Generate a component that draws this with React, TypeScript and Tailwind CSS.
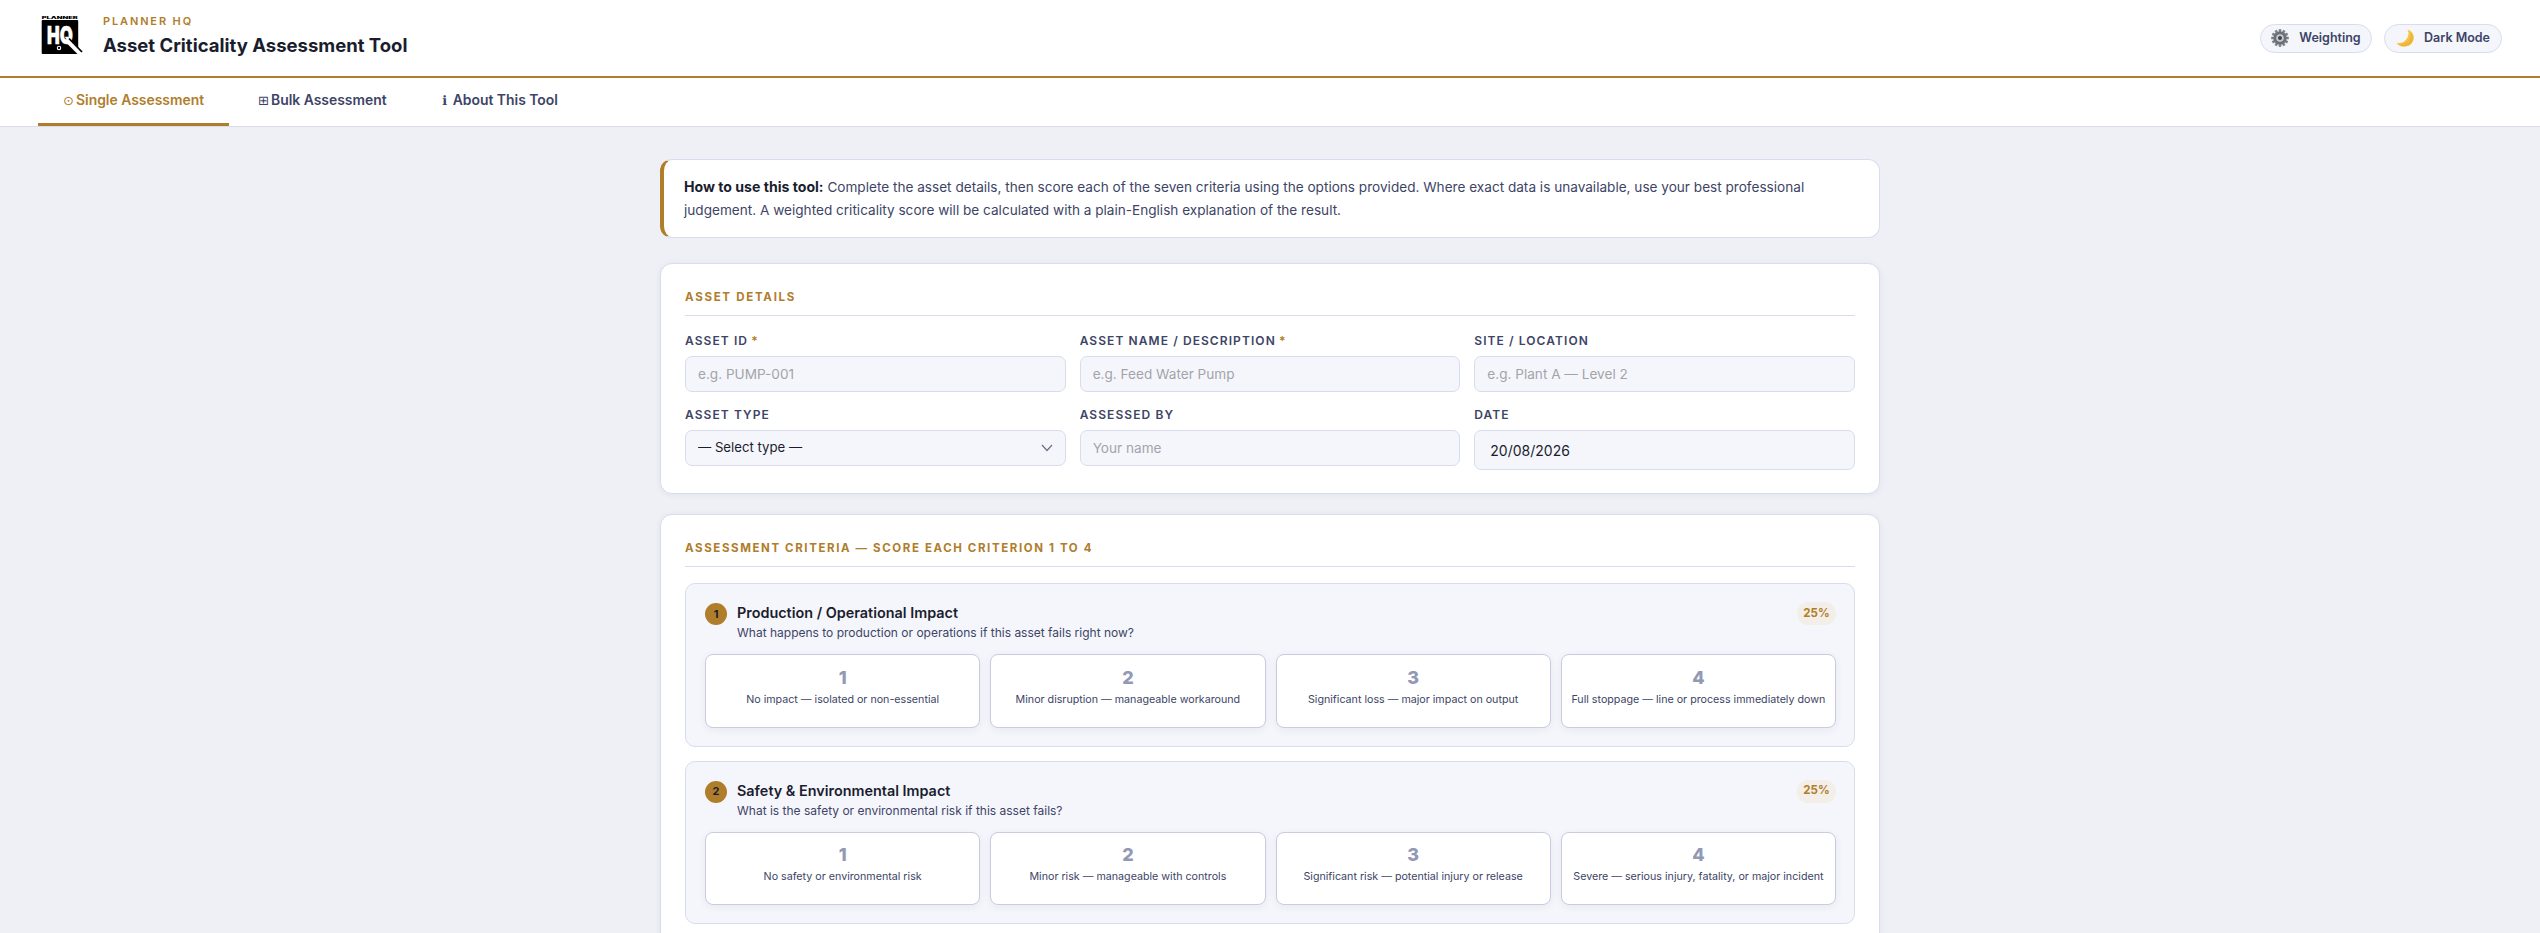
import React from "react";

const gold = "text-[#b07d2b]";

function Logo() {
  return (
    <svg width="42" height="38" viewBox="0 0 42 38" className="mb-[6px] shrink-0 overflow-visible">
      <text x="0.7" y="3.4" fontSize="3.8" fontWeight="900" fontFamily="Inter, sans-serif" textLength="36" lengthAdjust="spacingAndGlyphs" fill="#000">PLANNER</text>
      <rect x="0.7" y="4" width="36.5" height="34" rx="1" fill="#000" />
      <text x="6" y="28" fontSize="25" fontWeight="900" fontFamily="Inter, sans-serif" textLength="26" lengthAdjust="spacingAndGlyphs" fill="#fff" stroke="#fff" strokeWidth="0.5">HQ</text>
      <path d="M27 25L39 37" stroke="#fff" strokeWidth="5" />
      <path d="M28 22.5L41 36" stroke="#000" strokeWidth="1.8" />
      <circle cx="18" cy="32" r="1.7" fill="none" stroke="#fff" strokeWidth="1.1" />
    </svg>
  );
}

function Gear() {
  const teeth = Array.from({ length: 12 }, (_, i) => i * 30);
  return (
    <svg width="18" height="18" viewBox="0 0 18 18" className="shrink-0">
      {teeth.map((a) => (
        <rect key={a} x="7.7" y="0.2" width="2.6" height="4" fill="#7d8087" transform={`rotate(${a} 9 9)`} />
      ))}
      <circle cx="9" cy="9" r="6.6" fill="#6d7077" />
      <circle cx="9" cy="9" r="3.8" fill="#c4c9d2" />
      <circle cx="9" cy="9" r="2" fill="#3f434b" />
    </svg>
  );
}

function Moon() {
  return (
    <svg width="18" height="18" viewBox="0 0 18 18" className="shrink-0">
      <path d="M11.5 0.5A8.6 8.6 0 0 1 17.6 9 8.6 8.6 0 0 1 9 17.5 8.6 8.6 0 0 1 0.6 13.7 9.5 9.5 0 0 0 11.5 0.5z" fill="#f6c445" />
      <path d="M14.5 3A8.6 8.6 0 0 1 17.6 9 8.6 8.6 0 0 1 9 17.5 8.6 8.6 0 0 1 2.5 15 10 10 0 0 0 14.5 3z" fill="#e5a92f" opacity="0.55" />
    </svg>
  );
}

function PillButton({ icon, label, w }: { icon: React.ReactNode; label: string; w: string }) {
  return (
    <button className={`flex h-[29px] items-center justify-center gap-[10px] rounded-full border border-[#d8dcee] bg-[#f5f6fb] text-[12.5px] font-semibold text-[#3d4466] ${w}`}>
      {icon}
      <span>{label}</span>
    </button>
  );
}

function Field({ label, req, children }: { label: string; req?: boolean; children: React.ReactNode }) {
  return (
    <div className="flex min-w-0 flex-col">
      <label className="mb-[6px] h-[18px] text-[12px] leading-[18px] font-semibold tracking-[0.09em] text-[#3d4466]">
        {label}
        {req && <span className={`${gold} -ml-[1px]`}> *</span>}
      </label>
      {children}
    </div>
  );
}

const inputCls =
  "h-[36px] w-full rounded-[7px] border border-[#d8dcee] bg-[#f5f6fb] px-[12px] text-[13.6px] text-[#1a1d2e] outline-none placeholder:text-[#a3a4aa]";

function TextField({ label, req, placeholder }: { label: string; req?: boolean; placeholder: string }) {
  return (
    <Field label={label} req={req}>
      <input className={inputCls} placeholder={placeholder} />
    </Field>
  );
}

function SectionTitle({ children, tight }: { children: React.ReactNode; tight?: boolean }) {
  return (
    <div className={`mb-[16px] border-b border-[#d8dcee] pb-[9px] text-[11.5px] leading-[18px] font-bold ${tight ? "tracking-[0.14em]" : "tracking-[0.15em]"} ${gold}`}>
      {children}
    </div>
  );
}

type Crit = { n: number; title: string; q: string; opts: string[] };

const criteria: Crit[] = [
  {
    n: 1,
    title: "Production / Operational Impact",
    q: "What happens to production or operations if this asset fails right now?",
    opts: [
      "No impact — isolated or non-essential",
      "Minor disruption — manageable workaround",
      "Significant loss — major impact on output",
      "Full stoppage — line or process immediately down",
    ],
  },
  {
    n: 2,
    title: "Safety & Environmental Impact",
    q: "What is the safety or environmental risk if this asset fails?",
    opts: [
      "No safety or environmental risk",
      "Minor risk — manageable with controls",
      "Significant risk — potential injury or release",
      "Severe — serious injury, fatality, or major incident",
    ],
  },
];

function Criterion({ c }: { c: Crit }) {
  return (
    <div className="rounded-[10px] border border-[#d8dcee] bg-[#f5f6fb] py-[18px] pr-[18px] pl-[19px]">
      <div className="mb-[11px] flex items-start justify-between">
        <div className="flex items-start gap-[10px]">
          <div className="mt-[1px] flex h-[22px] w-[22px] items-center justify-center rounded-full bg-[#b07d2b] text-[11px] font-bold text-[#1a1d2e]">
            {c.n}
          </div>
          <div className="pt-[1px]">
            <div className="text-[14.4px] leading-[20px] font-semibold text-[#1a1d2e]">{c.title}</div>
            <div className="text-[12px] leading-[20px] text-[#3d4466]">{c.q}</div>
          </div>
        </div>
        <div className="flex h-[23px] w-[39px] items-center justify-center rounded-full bg-[#f3efe8] text-[11.5px] font-bold text-[#b07d2b]">
          25%
        </div>
      </div>
      <div className="grid grid-cols-4 gap-[10px]">
        {c.opts.map((o, i) => (
          <button
            key={o}
            className="flex h-[73.5px] flex-col items-center rounded-[8px] border-[1.5px] border-[#c8cbe2] bg-white pt-[10.5px] shadow-[0_2px_8px_rgba(26,29,46,0.06)]"
          >
            <span className="text-[18px] leading-[24px] font-extrabold text-[#9399b5]">{i + 1}</span>
            <span className="mt-[2px] text-[10.7px] leading-[16px] whitespace-nowrap text-[#3d4466]">{o}</span>
          </button>
        ))}
      </div>
    </div>
  );
}

const cardCls = "rounded-[12px] border border-[#d8dcee] bg-white p-[24px] shadow-[0_1px_6px_rgba(26,29,46,0.06)]";

const tabs: { g: string; t: string; a: boolean; w: string; gw: string }[] = [
  { g: "⊙", t: "Single Assessment", a: true, w: "w-[191px]", gw: "w-[13px]" },
  { g: "⊞", t: "Bulk Assessment", a: false, w: "w-[180px]", gw: "w-[13px]" },
  { g: "ℹ", t: "About This Tool", a: false, w: "", gw: "w-[10.7px]" },
];

export default function App() {
  return (
    <div className="h-screen overflow-hidden bg-[#eef0f6] font-['Inter',sans-serif]">
      <header className="flex h-[78px] items-center justify-between border-b-2 border-[#b07d2b] bg-white px-[38px]">
        <div className="flex items-center gap-[20px] pl-[3px]">
          <Logo />
          <div className="mb-[5px] flex flex-col">
            <span className={`text-[11px] leading-[16px] font-semibold tracking-[0.17em] ${gold}`}>PLANNER HQ</span>
            <span className="mt-[3px] text-[18.5px] leading-[26px] font-bold text-[#1a1d2e]">Asset Criticality Assessment Tool</span>
          </div>
        </div>
        <div className="flex items-center gap-[12px]">
          <PillButton icon={<Gear />} label="Weighting" w="w-[112px]" />
          <PillButton icon={<Moon />} label="Dark Mode" w="w-[118px]" />
        </div>
      </header>

      <nav className="flex h-[49px] items-stretch gap-[4px] border-b border-[#d8dcee] bg-white px-[38px]">
        {tabs.map(({ g, t, a, w, gw }) => (
          <div
            key={t}
            className={`flex shrink-0 items-center border-b-[3px] px-[25px] text-[13.9px] font-semibold whitespace-nowrap ${w} ${
              a ? "border-[#b07d2b] text-[#b07d2b]" : "border-transparent text-[#3d4466]"
            }`}
          >
            <span className={`shrink-0 font-['DejaVu_Sans',sans-serif] text-[13px] font-normal ${gw}`}>{g}</span>
            <span>{t}</span>
          </div>
        ))}
      </nav>

      <main className="mx-auto flex w-[1220px] flex-col gap-[20px] pt-[32px]">
        <div className="mb-[5px] h-[79px] rounded-[12px] border border-l-4 border-[#d8dcee] border-l-[#b07d2b] bg-white py-[15.5px] pr-[24px] pl-[20px] text-[13.6px] leading-[23px] text-[#3d4466]">
          <strong className="text-[14.1px] leading-[16px] font-bold text-[#1a1d2e]">How to use this tool:</strong> Complete the asset details, then score each of the seven criteria using the options provided. Where exact data is unavailable, use your best professional judgement. A weighted criticality score will be calculated with a plain-English explanation of the result.
        </div>

        <section className={`${cardCls} pb-[23px]`}>
          <SectionTitle>ASSET DETAILS</SectionTitle>
          <div className="grid grid-cols-3 items-start gap-x-[14px] gap-y-[14px]">
            <TextField label="ASSET ID" req placeholder="e.g. PUMP-001" />
            <TextField label="ASSET NAME / DESCRIPTION" req placeholder="e.g. Feed Water Pump" />
            <TextField label="SITE / LOCATION" placeholder="e.g. Plant A — Level 2" />
            <Field label="ASSET TYPE">
              <div className="relative">
                <select className={`${inputCls} appearance-none text-[13.2px]!`} defaultValue="">
                  <option value="">— Select type —</option>
                </select>
                <svg className="pointer-events-none absolute top-[13px] right-[13px]" width="12" height="10" viewBox="0 0 12 10" fill="none">
                  <path d="M1 2l5 5.5L11 2" stroke="#6b7085" strokeWidth="1.2" />
                </svg>
              </div>
            </Field>
            <TextField label="ASSESSED BY" placeholder="Your name" />
            <Field label="DATE">
              <input className={`${inputCls} h-[40px]! px-[15px]! text-[14px]!`} defaultValue="20/08/2026" />
            </Field>
          </div>
        </section>

        <section className={cardCls}>
          <SectionTitle tight>ASSESSMENT CRITERIA — SCORE EACH CRITERION 1 TO 4</SectionTitle>
          <div className="flex flex-col gap-[14px]">
            {criteria.map((c) => (
              <Criterion key={c.n} c={c} />
            ))}
          </div>
        </section>
      </main>
    </div>
  );
}
